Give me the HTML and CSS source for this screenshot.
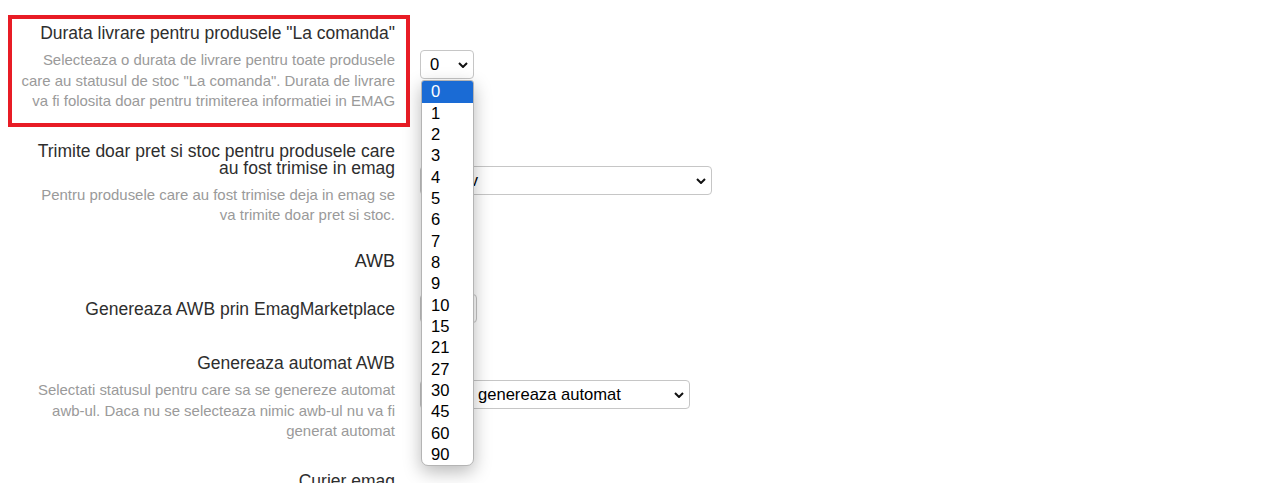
FILE: index.html
```html
<!DOCTYPE html>
<html lang="ro">
<head>
    <meta charset="UTF-8">
    <title>Setari eMAG</title>
    <link rel="stylesheet" href="styles.css">
</head>
<body>
    <form class="page" id="settings">
        <div class="row">
            <div class="lbl hl">
                <div class="title">Durata livrare pentru produsele "La comanda"</div>
                <div class="help">Selecteaza o durata de livrare pentru toate produsele care au statusul de stoc "La comanda". Durata de livrare va fi folosita doar pentru trimiterea informatiei in EMAG</div>
            </div>
            <div class="ctl">
                <div class="sel">
                    <select class="w-xs" id="handling">
                        <option>0</option>
                    </select>
                    <svg class="chev" width="10" height="6" viewBox="0 0 10 6"><path d="M1 1 L5 5 L9 1" fill="none" stroke="#111" stroke-width="2"/></svg>
                    <ul class="popup">
                        <li class="on">0</li>
                        <li>1</li>
                        <li>2</li>
                        <li>3</li>
                        <li>4</li>
                        <li>5</li>
                        <li>6</li>
                        <li>7</li>
                        <li>8</li>
                        <li>9</li>
                        <li>10</li>
                        <li>15</li>
                        <li>21</li>
                        <li>27</li>
                        <li>30</li>
                        <li>45</li>
                        <li>60</li>
                        <li>90</li>
                    </ul>
                </div>
            </div>
        </div>

        <div class="row">
            <div class="lbl">
                <div class="title">Trimite doar pret si stoc pentru produsele care au fost trimise in emag</div>
                <div class="help">Pentru produsele care au fost trimise deja in emag se<br>va trimite doar pret si stoc.</div>
            </div>
            <div class="ctl">
                <div class="sel">
                    <select class="w-lg">
                        <option>Inactiv</option>
                    </select>
                    <svg class="chev" width="10" height="6" viewBox="0 0 10 6"><path d="M1 1 L5 5 L9 1" fill="none" stroke="#111" stroke-width="2"/></svg>
                </div>
            </div>
        </div>

        <div class="section">AWB</div>

        <div class="row single">
            <div class="lbl">
                <div class="title">Genereaza AWB prin EmagMarketplace</div>
            </div>
            <div class="ctl">
                <div class="sel">
                    <select class="w-sm">
                        <option>Nu</option>
                    </select>
                    <svg class="chev" width="10" height="6" viewBox="0 0 10 6"><path d="M1 1 L5 5 L9 1" fill="none" stroke="#111" stroke-width="2"/></svg>
                </div>
            </div>
        </div>

        <div class="row">
            <div class="lbl">
                <div class="title">Genereaza automat AWB</div>
                <div class="help">Selectati statusul pentru care sa se genereze automat awb-ul. Daca nu se selecteaza nimic awb-ul nu va fi generat automat</div>
            </div>
            <div class="ctl">
                <div class="sel">
                    <select class="w-md">
                        <option>Nu se genereaza automat</option>
                    </select>
                    <svg class="chev" width="10" height="6" viewBox="0 0 10 6"><path d="M1 1 L5 5 L9 1" fill="none" stroke="#111" stroke-width="2"/></svg>
                </div>
            </div>
        </div>

        <div class="row">
            <div class="lbl">
                <div class="title">Curier emag</div>
            </div>
        </div>
    </form>
</body>
</html>
```

FILE: styles.css
```css
body{
    margin: 0;
    font-family: "Liberation Sans", Arial, sans-serif;
    background: #fff;
}

.page{
    display: flex;
    flex-direction: column;
    padding-top: 15px;
}

.row{
    display: flex;
    align-items: center;
    margin-bottom: 6px;
}

.lbl{
    box-sizing: border-box;
    width: 402px;
    margin-left: 8px;
    border: 4px solid transparent;
    padding: 6px 11px 11px 5px;
    text-align: right;
}
/* chenarul rosu */
.hl{
    border-color: #e81c25;
}
.single .lbl{
    padding-bottom: 17px;
}

.title{
    font-size: 17.5px;
    line-height: 17px;
    color: #2e2e2e;
}
.help{
    margin-top: 8px;
    font-size: 14.95px;
    line-height: 20.6px;
    color: #9a9a9a;
}

.section{
    box-sizing: border-box;
    width: 402px;
    margin: 4px 0 20px 8px;
    padding-right: 15px;
    text-align: right;
    font-size: 18px;
    line-height: 20px;
    color: #2a2a2a;
}

.ctl{
    margin-left: 10px;
    margin-bottom: 12px;
}

.sel{
    position: relative;
    display: inline-block;
}
.sel select{
    -webkit-appearance: none;
    appearance: none;
    box-sizing: border-box;
    display: block;
    height: 29px;
    margin: 0;
    padding: 0 0 0 9px;
    border: 1px solid #c6c6c6;
    border-radius: 4px;
    background: #fff;
    color: #000;
    font-family: "Liberation Sans", Arial, sans-serif;
    font-size: 16.6px;
}
.w-xs{ width: 54px; }
.w-sm{ width: 57px; }
.w-md{ width: 270px; }
.w-lg{ width: 292px; }

.chev{
    position: absolute;
    right: 6px;
    top: 12px;
    pointer-events: none;
}

/* lista deschisa */
.popup{
    position: absolute;
    top: 30px;
    left: 1px;
    z-index: 10;
    box-sizing: border-box;
    width: 53px;
    margin: 0;
    padding: 0;
    list-style: none;
    background: #fff;
    border: 1px solid #b4b4b4;
    border-radius: 3px 3px 7px 7px;
    box-shadow: 0 6px 18px rgba(0, 0, 0, .28);
    overflow: hidden;
}
.popup li{
    padding-left: 9px;
    height: 21.33px;
    line-height: 21.33px;
    font-size: 16.6px;
    color: #000;
}
.popup li.on{
    background: #1a6bd5;
    color: #fff;
}
```
